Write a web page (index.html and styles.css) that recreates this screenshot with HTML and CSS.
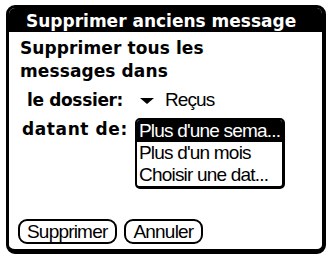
FILE: index.html
```html
<!DOCTYPE html>
<html>
<head>
<meta charset="utf-8">
<link rel="stylesheet" href="styles.css">
</head>
<body>
<div class="dialog">
  <div class="title">Supprimer anciens message</div>
  <div class="content">
    <div class="heading">Supprimer tous les<br>messages dans</div>
    <div class="row folder">
      <span class="label label-folder">le dossier:</span>
      <span class="tri"></span>
      <span class="trigger">Reçus</span>
    </div>
    <div class="row dated">
      <span class="label label-date">datant de:</span>
      <div class="list">
        <div class="item sel">Plus d'une sema...</div>
        <div class="item">Plus d'un mois</div>
        <div class="item">Choisir une dat...</div>
      </div>
    </div>
    <div class="buttons">
      <span class="btn">Supprimer</span>
      <span class="btn">Annuler</span>
    </div>
  </div>
</div>
</body>
</html>
```
FILE: styles.css
```css
html, body { margin: 0; padding: 0; background: #fff; }
body { width: 329px; height: 259px; overflow: hidden; }
.dialog {
  margin: 5px 0 0 6px;
  width: 320px;
  height: 249px;
  box-sizing: border-box;
  border: 3px solid #000;
  border-right-width: 4px;
  border-bottom-width: 5px;
  border-radius: 9px;
  display: flex;
  flex-direction: column;
  overflow: hidden;
  font-family: "DejaVu Sans", sans-serif;
  color: #000;
}
.title {
  background: #000;
  color: #fff;
  font-weight: bold;
  font-size: 17px;
  height: 24px;
  line-height: 26px;
  padding-left: 17px;
  white-space: nowrap;
}
.content {
  flex: 1;
  display: flex;
  flex-direction: column;
  padding: 5px 0 0 9px;
}
.heading {
  font-weight: bold;
  font-size: 17px;
  line-height: 23px;
  letter-spacing: 0.1px;
  padding-left: 2px;
}
.row { display: flex; }
.label { font-weight: bold; font-size: 17px; }
.folder {
  margin-top: 5px;
  padding-left: 9px;
  height: 23px;
  line-height: 23px;
  align-items: baseline;
}
.label-folder { letter-spacing: -0.35px; width: 113px; }
.tri {
  align-self: center;
  width: 0; height: 0;
  border-left: 7px solid transparent;
  border-right: 7px solid transparent;
  border-top: 6px solid #000;
  margin-top: 3px;
  margin-right: 11px;
}
.trigger {
  font-family: "Liberation Sans", sans-serif;
  font-size: 19px;
  letter-spacing: -0.9px;
}
.dated { margin-top: 7px; padding-left: 4px; align-items: flex-start; }
.label-date { line-height: 22px; letter-spacing: 0.6px; width: 113px; }
.list {
  width: 150px;
  box-sizing: border-box;
  border: 2px solid #000;
  border-right-width: 3px;
  border-bottom-width: 3px;
  border-radius: 5px;
  overflow: hidden;
  font-family: "Liberation Sans", sans-serif;
  font-size: 19px;
  letter-spacing: -0.8px;
}
.item { height: 22px; line-height: 22px; padding-left: 2px; white-space: nowrap; }
.item.sel { background: #000; color: #fff; }
.buttons { margin-top: auto; margin-bottom: 5px; display: flex; gap: 7px; }
.btn {
  border: 2px solid #000;
  border-radius: 9px;
  height: 25px;
  line-height: 22px;
  box-sizing: border-box;
  padding: 0 8px 0 7px;
  font-family: "Liberation Sans", sans-serif;
  font-size: 19px;
  letter-spacing: -0.8px;
}
```
